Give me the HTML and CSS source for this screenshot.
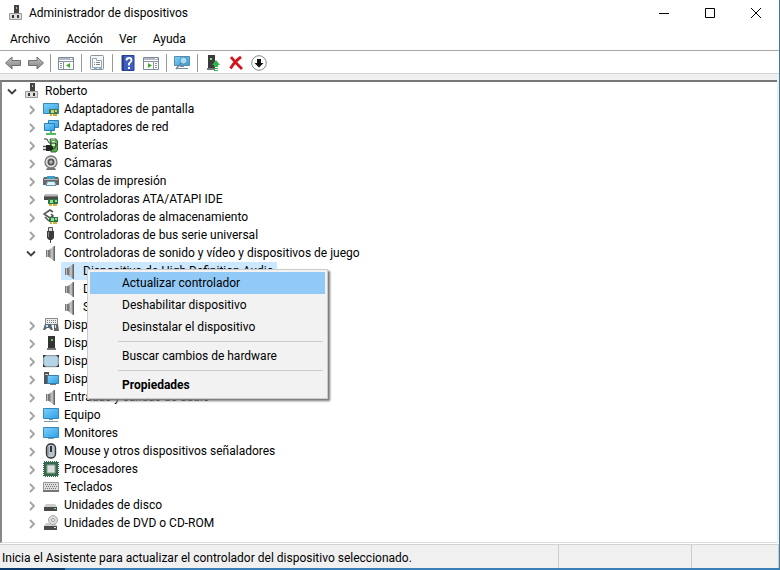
FILE: index.html
```html
<!DOCTYPE html>
<html lang="es">
<head>
	<meta charset="utf-8">
	<title>Administrador de dispositivos</title>
	<link rel="stylesheet" href="styles.css">
</head>
<body>
	<svg class="sprites" aria-hidden="true">
		<defs>
			<linearGradient id="blue" x1="0" y1="0" x2="1" y2="1">
				<stop offset="0" stop-color="#7fd0fa"/>
				<stop offset="1" stop-color="#2d9fe8"/>
			</linearGradient>
			<linearGradient id="metal" x1="0" y1="0" x2="1" y2="0">
				<stop offset="0" stop-color="#6b6b6b"/>
				<stop offset=".6" stop-color="#d0d0d0"/>
				<stop offset="1" stop-color="#777"/>
			</linearGradient>
			<linearGradient id="arrow" x1="0" y1="0" x2="0" y2="1">
				<stop offset="0" stop-color="#c4c4c4"/>
				<stop offset="1" stop-color="#808080"/>
			</linearGradient>
		</defs>
		<symbol id="i-right" viewBox="0 0 16 16"><path d="M7 5l4 4-4 4" fill="none" stroke="#a2a2a2" stroke-width="1.800"/></symbol>
		<symbol id="i-down" viewBox="0 0 16 16"><path d="M4 6.500l4 4 4-4" fill="none" stroke="#404040" stroke-width="1.800"/></symbol>
		<symbol id="i-pc" viewBox="0 0 16 16">
			<path d="M6 0h5v9H6z" fill="#444"/><path d="M8 2h1v2H8z" fill="#bbb"/>
			<path d="M1.500 8.500h12v6h-12z" fill="#dedede" stroke="#999"/><path d="M4 10h2v3H4zM9 10h2v3H9z" fill="#333"/>
		</symbol>
		<symbol id="i-display" viewBox="0 0 16 16">
			<path d="M.5 2.500h15v10H.5z" fill="url(#blue)" stroke="#3a86b8"/>
			<path d="M6 8h9v5H6z" fill="#3d7a4d"/><path d="M8 9h3v3H8zM12 9h2v2h-2z" fill="#c9d87a"/><path d="M7 13h2v2H7zM10 13h4v2h-4z" fill="#d6a92c"/>
		</symbol>
		<symbol id="i-net" viewBox="0 0 16 16">
			<path d="M5.500 1.500h10v7h-10z" fill="url(#blue)" stroke="#2b7fb4"/>
			<path d="M1.500 4.500h10v7h-10z" fill="url(#blue)" stroke="#2b7fb4"/>
			<path d="M7 12h2v2h4v2H3v-2h4z" fill="#4fbd68"/>
		</symbol>
		<symbol id="i-battery" viewBox="0 0 16 16">
			<path d="M7 2h6l1.500 2v9L13 15H8z" fill="#53b04b" stroke="#2e6b2c"/><path d="M8 1h4v2H8z" fill="#aaa"/><path d="M9 4h3v5H9z" fill="#c6f3bc"/>
			<path d="M1 2q4-1 4 2t6 2q3 0 2 3t-4 3" fill="none" stroke="#333"/><path d="M0 9.500h4M0 12.500h4" stroke="#555" stroke-width="1.300"/><path d="M3 8h3q4 0 4 3t-4 3H3z" fill="#222"/>
		</symbol>
		<symbol id="i-camera" viewBox="0 0 16 16">
			<path d="M4 13h8l1 2H3z" fill="#777"/><circle cx="8" cy="7" r="6" fill="#ddd" stroke="#777" stroke-width="1.300"/>
			<circle cx="8" cy="7" r="3.500" fill="#555"/><circle cx="8" cy="7" r="1.700" fill="#bbb"/>
		</symbol>
		<symbol id="i-printer" viewBox="0 0 16 16">
			<path d="M4 3h8v4H4z" fill="#3f9dc9"/><path d="M1 4h3v2h8V4h3l1 2v6h-3l-1-3H4l-1 3H0V6z" fill="#666"/><path d="M1 6h14v1H1z" fill="#bbb"/>
			<path d="M4.500 8.500h7l1.500 4H3z" fill="#def4fc" stroke="#6b93a8"/>
		</symbol>
		<symbol id="i-ata" viewBox="0 0 16 16">
			<path d="M3 3h11l1 2v4H1V5z" fill="#777"/><path d="M3 3h11v2H2z" fill="#bbb"/><path d="M1 6h14v3H1z" fill="#4a4a4a"/>
			<path d="M5 8h10v5H5z" fill="#2f7548"/><path d="M7 9h3v3H7zM12 9h2v2h-2z" fill="#8ee38f"/><path d="M6 13h3v2H6zM10 13h4v2h-4z" fill="#d6b13a"/>
		</symbol>
		<symbol id="i-storage" viewBox="0 0 16 16">
			<path d="M10 3L7 1 1 5l6 4 3-2-2-2M2 8l4 4" fill="none" stroke="#555" stroke-width="1.600"/>
			<path d="M6 8h9v5H6z" fill="#2f7548"/><path d="M8 9h3v3H8zM12 9h2v2h-2z" fill="#8ee38f"/><path d="M7 13h2v2H7zM10 13h4v2h-4z" fill="#d6b13a"/>
		</symbol>
		<symbol id="i-usb" viewBox="0 0 16 16"><path d="M5.500.5h4v4h-4z" fill="#ddd" stroke="#555"/><path d="M4 4h7v7l-2 2H6l-2-2z" fill="#3c3c3c"/><path d="M7 13h1v3H7z" fill="#444"/><path d="M5 5h1v5H5z" fill="#888"/></symbol>
		<symbol id="i-sound" viewBox="0 0 16 16"><path d="M3 5h3v7H3z" fill="#777"/><path d="M6 5l5-4v15l-5-4z" fill="url(#metal)"/><path d="M11 1h1v15h-1z" fill="#666"/><path d="M4 5h1v7H4z" fill="#bbb"/></symbol>
		<symbol id="i-hid" viewBox="0 0 16 16">
			<path d="M2.500 1.500h12v6h-12z" fill="#eee" stroke="#888"/><path d="M4 3.500h9M4 5.500h9" stroke="#777" stroke-dasharray="1 1"/>
			<path d="M2 7h6l2 6H8L6 11H4l-2 2H0z" fill="#536879"/><path d="M11 7h4l1 7h-5z" fill="#666"/><path d="M12 8h1v3h-1zM3 8h2v2H3z" fill="#cfe4ee"/>
		</symbol>
		<symbol id="i-tower" viewBox="0 0 16 16"><path d="M5 1h7v12H5z" fill="#333"/><path d="M4 13h9v2H4z" fill="#777"/><path d="M8 4h2v2H8z" fill="#58dc58"/></symbol>
		<symbol id="i-tablet" viewBox="0 0 16 16"><rect x=".7" y="2.700" width="14.600" height="11" rx="1" fill="#b5d5e6" stroke="#7d8a91"/><path d="M0 2h3L0 5zM16 2h-3l3 3zM0 14h3l-3-3zM16 14h-3l3-3z" fill="#333"/></symbol>
		<symbol id="i-system" viewBox="0 0 16 16"><path d="M1 1h5v12H1z" fill="#555"/><path d="M2 3h3v1H2z" fill="#ccc"/><path d="M4.500 4.500h11v8h-11z" fill="url(#blue)" stroke="#3a7faa"/><path d="M7 13h6v1H7z" fill="#777"/></symbol>
		<symbol id="i-computer" viewBox="0 0 16 16"><path d="M.5 1.500h15v10H.5z" fill="url(#blue)" stroke="#3488bd"/><path d="M6 12h4v1H6zM1 14h14v1H1z" fill="#7b98a8"/></symbol>
		<symbol id="i-monitor" viewBox="0 0 16 16"><path d="M.5 2.500h15v10H.5z" fill="url(#blue)" stroke="#3488bd"/><path d="M5 13h6v1H5z" fill="#7b98a8"/></symbol>
		<symbol id="i-mouse" viewBox="0 0 16 16"><rect x="3.500" y="1" width="9" height="14" rx="4" fill="#b8c2cb" stroke="#333" stroke-width="1.400"/><path d="M7 3h2v6H7z" fill="#333"/><path d="M5 4v8" stroke="#717e8a"/></symbol>
		<symbol id="i-cpu" viewBox="0 0 16 16"><path d="M1 1h14v14H1z" fill="#356b4b" stroke="#356b4b" stroke-width="2" stroke-dasharray="1 1"/><path d="M4 4h8v8H4z" fill="#ddd" stroke="#89a392"/></symbol>
		<symbol id="i-keyboard" viewBox="0 0 16 16"><path d="M.5 3.500h15v9H.5z" fill="#ddd" stroke="#999"/><path d="M2 5.500h12M3 7.500h11M2 9.500h12" stroke="#777" stroke-dasharray="1 1"/><path d="M0 11h16v2H0z" fill="#777"/></symbol>
		<symbol id="i-disk" viewBox="0 0 16 16"><path d="M3 7h9l2 3H1z" fill="#ccc"/><path d="M1 10h13v4H1z" fill="#4a4a4a"/><path d="M11 11h2v1h-2z" fill="#6ef08a"/></symbol>
		<symbol id="i-dvd" viewBox="0 0 16 16"><path d="M3 8h9l2 3H1z" fill="#ccc"/><circle cx="10" cy="5" r="4.500" fill="#ddd" stroke="#aaa"/><circle cx="10" cy="5" r="1.500" fill="#fff" stroke="#999"/><path d="M1 11h13v4H1z" fill="#4a4a4a"/><path d="M11 12h2v1h-2z" fill="#ddd"/></symbol>
		<symbol id="i-panel" viewBox="0 0 16 16"><path d="M.5 2.500h15v12H.5z" fill="#fff" stroke="#7f8a96"/><path d="M1 3h14v2H1z" fill="#b1bac6"/><path d="M12 3.500h2" stroke="#fff"/><path d="M1 6.500h14" stroke="#8a95a2"/></symbol>
	</svg>

	<div class="window">
		<header class="titlebar">
			<svg class="icon"><use href="#i-pc"/></svg>
			<h1>Administrador de dispositivos</h1>
			<div class="controls">
				<button aria-label="Minimizar"><svg viewBox="0 0 12 12"><path d="M1 6.500h10"/></svg></button>
				<button aria-label="Maximizar"><svg viewBox="0 0 12 12"><path d="M1.500 1.500h9v9h-9z"/></svg></button>
				<button aria-label="Cerrar"><svg viewBox="0 0 12 12"><path d="M1 1l10 10M11 1L1 11"/></svg></button>
			</div>
		</header>

		<nav class="menubar">
			<button>Archivo</button>
			<button>Acción</button>
			<button>Ver</button>
			<button>Ayuda</button>
		</nav>

		<div class="toolbar">
			<div class="group">
				<button aria-label="Atrás"><svg class="icon"><path d="M.5 8L7 2v3.500h8.500v5H7V14z" fill="url(#arrow)" stroke="#6f6f6f"/></svg></button>
				<button aria-label="Adelante"><svg class="icon"><path d="M15.500 8L9 2v3.500H.5v5H9V14z" fill="url(#arrow)" stroke="#6f6f6f"/></svg></button>
			</div>
			<div class="group">
				<button aria-label="Mostrar árbol"><svg class="icon"><use href="#i-panel"/><path d="M5.500 7v7" stroke="#8a95a2"/><path d="M2 8.500h2M2 10.500h2M2 12.500h2" stroke="#8a95a2"/><path d="M12 8v5l-4-2.500z" fill="#3fae29"/></svg></button>
			</div>
			<div class="group">
				<button aria-label="Propiedades"><svg class="icon"><rect x="1.500" y=".5" width="13" height="14" rx="1" fill="#f4f6f8" stroke="#8c939a"/><path d="M3.500 3.500h4v2h5v7h-9z" fill="#fff" stroke="#9aa4ae"/><path d="M5 7.500h1M7 7.500h4M5 9.500h1M7 9.500h4" stroke="#7a858f"/><path d="M5 13.500h3M10 13.500h3" stroke="#5fc3e0"/></svg></button>
			</div>
			<div class="group">
				<button aria-label="Ayuda"><svg class="icon"><path d="M2 .5h12v15H2z" fill="#3e5fc0" stroke="#2b3f8e"/><path d="M2 1h2v14H2z" fill="#2b3f8e"/><path d="M6.500 5.500q0-2.500 2.500-2.500t2.500 2.300Q11.500 7 9 8.500v2" fill="none" stroke="#fff" stroke-width="1.800"/><path d="M8 12h2v2H8z" fill="#fff"/></svg></button>
				<button aria-label="Mostrar acciones"><svg class="icon"><use href="#i-panel"/><path d="M10.500 7v7" stroke="#8a95a2"/><path d="M12 8.500h2M12 10.500h2M12 12.500h2" stroke="#8a95a2"/><path d="M5 8v5l4-2.500z" fill="#3fae29"/></svg></button>
			</div>
			<div class="group">
				<button aria-label="Buscar cambios de hardware"><svg class="icon"><path d="M.5 1.500h15v9H.5z" fill="url(#blue)" stroke="#5a8ba8"/><path d="M6 11h4v1H6zM2 13h12v1H2z" fill="#78909c"/><circle cx="9.500" cy="5.500" r="3.500" fill="#a9dcf5" stroke="#5b8fae"/><path d="M7 8l-5 6" stroke="#6d8797" stroke-width="1.500"/></svg></button>
			</div>
			<div class="group">
				<button aria-label="Actualizar controlador"><svg class="icon"><path d="M3 0h7v13H3z" fill="#3b3b3b"/><path d="M2 13h8v2H2z" fill="#777"/><path d="M5 3h2v2H5z" fill="#7fe07f"/><path d="M11 5l4 5h-2v2H9v-2H7zM9 13h4v1H9zM9 15h4v1H9z" fill="#35b14a"/></svg></button>
				<button aria-label="Desinstalar dispositivo"><svg class="icon"><path d="M3 2q3 4 11 12M13 2Q7 6 2.500 13.500" fill="none" stroke="#d3141c" stroke-width="2.800"/></svg></button>
				<button aria-label="Deshabilitar dispositivo"><svg class="icon"><circle cx="8" cy="8" r="7.300" fill="#fff" stroke="#888"/><path d="M6 4h4v4h2.500L8 12.500 3.500 8H6z" fill="#111"/></svg></button>
			</div>
		</div>

		<main class="tree">
			<ul>
				<li>
					<div class="row"><button class="toggle" aria-label="Contraer"><svg class="icon"><use href="#i-down"/></svg></button><span class="node"><svg class="icon"><use href="#i-pc"/></svg>Roberto</span></div>
					<ul>
						<li class="row"><button class="toggle" aria-label="Expandir"><svg class="icon"><use href="#i-right"/></svg></button><span class="node"><svg class="icon"><use href="#i-display"/></svg>Adaptadores de pantalla</span></li>
						<li class="row"><button class="toggle" aria-label="Expandir"><svg class="icon"><use href="#i-right"/></svg></button><span class="node"><svg class="icon"><use href="#i-net"/></svg>Adaptadores de red</span></li>
						<li class="row"><button class="toggle" aria-label="Expandir"><svg class="icon"><use href="#i-right"/></svg></button><span class="node"><svg class="icon"><use href="#i-battery"/></svg>Baterías</span></li>
						<li class="row"><button class="toggle" aria-label="Expandir"><svg class="icon"><use href="#i-right"/></svg></button><span class="node"><svg class="icon"><use href="#i-camera"/></svg>Cámaras</span></li>
						<li class="row"><button class="toggle" aria-label="Expandir"><svg class="icon"><use href="#i-right"/></svg></button><span class="node"><svg class="icon"><use href="#i-printer"/></svg>Colas de impresión</span></li>
						<li class="row"><button class="toggle" aria-label="Expandir"><svg class="icon"><use href="#i-right"/></svg></button><span class="node"><svg class="icon"><use href="#i-ata"/></svg>Controladoras ATA/ATAPI IDE</span></li>
						<li class="row"><button class="toggle" aria-label="Expandir"><svg class="icon"><use href="#i-right"/></svg></button><span class="node"><svg class="icon"><use href="#i-storage"/></svg>Controladoras de almacenamiento</span></li>
						<li class="row"><button class="toggle" aria-label="Expandir"><svg class="icon"><use href="#i-right"/></svg></button><span class="node"><svg class="icon"><use href="#i-usb"/></svg>Controladoras de bus serie universal</span></li>
						<li>
							<div class="row"><button class="toggle" aria-label="Contraer"><svg class="icon"><use href="#i-down"/></svg></button><span class="node"><svg class="icon"><use href="#i-sound"/></svg>Controladoras de sonido y vídeo y dispositivos de juego</span></div>
							<ul class="leaves">
								<li class="row selected">
									<span class="node"><svg class="icon"><use href="#i-sound"/></svg>Dispositivo de High Definition Audio</span>
									<div class="context-menu">
										<button class="active">Actualizar controlador</button>
										<button>Deshabilitar dispositivo</button>
										<button>Desinstalar el dispositivo</button>
										<hr>
										<button>Buscar cambios de hardware</button>
										<hr>
										<button class="default">Propiedades</button>
									</div>
								</li>
								<li class="row"><span class="node"><svg class="icon"><use href="#i-sound"/></svg>D</span></li>
								<li class="row"><span class="node"><svg class="icon"><use href="#i-sound"/></svg>S</span></li>
							</ul>
						</li>
						<li class="row"><button class="toggle" aria-label="Expandir"><svg class="icon"><use href="#i-right"/></svg></button><span class="node"><svg class="icon"><use href="#i-hid"/></svg>Disp</span></li>
						<li class="row"><button class="toggle" aria-label="Expandir"><svg class="icon"><use href="#i-right"/></svg></button><span class="node"><svg class="icon"><use href="#i-tower"/></svg>Disp</span></li>
						<li class="row"><button class="toggle" aria-label="Expandir"><svg class="icon"><use href="#i-right"/></svg></button><span class="node"><svg class="icon"><use href="#i-tablet"/></svg>Disp</span></li>
						<li class="row"><button class="toggle" aria-label="Expandir"><svg class="icon"><use href="#i-right"/></svg></button><span class="node"><svg class="icon"><use href="#i-system"/></svg>Disp</span></li>
						<li class="row"><button class="toggle" aria-label="Expandir"><svg class="icon"><use href="#i-right"/></svg></button><span class="node"><svg class="icon"><use href="#i-sound"/></svg>Entradas y salidas de audio</span></li>
						<li class="row"><button class="toggle" aria-label="Expandir"><svg class="icon"><use href="#i-right"/></svg></button><span class="node"><svg class="icon"><use href="#i-computer"/></svg>Equipo</span></li>
						<li class="row"><button class="toggle" aria-label="Expandir"><svg class="icon"><use href="#i-right"/></svg></button><span class="node"><svg class="icon"><use href="#i-monitor"/></svg>Monitores</span></li>
						<li class="row"><button class="toggle" aria-label="Expandir"><svg class="icon"><use href="#i-right"/></svg></button><span class="node"><svg class="icon"><use href="#i-mouse"/></svg>Mouse y otros dispositivos señaladores</span></li>
						<li class="row"><button class="toggle" aria-label="Expandir"><svg class="icon"><use href="#i-right"/></svg></button><span class="node"><svg class="icon"><use href="#i-cpu"/></svg>Procesadores</span></li>
						<li class="row"><button class="toggle" aria-label="Expandir"><svg class="icon"><use href="#i-right"/></svg></button><span class="node"><svg class="icon"><use href="#i-keyboard"/></svg>Teclados</span></li>
						<li class="row"><button class="toggle" aria-label="Expandir"><svg class="icon"><use href="#i-right"/></svg></button><span class="node"><svg class="icon"><use href="#i-disk"/></svg>Unidades de disco</span></li>
						<li class="row"><button class="toggle" aria-label="Expandir"><svg class="icon"><use href="#i-right"/></svg></button><span class="node"><svg class="icon"><use href="#i-dvd"/></svg>Unidades de DVD o CD-ROM</span></li>
					</ul>
				</li>
			</ul>
		</main>

		<footer class="statusbar">
			<span>Inicia el Asistente para actualizar el controlador del dispositivo seleccionado.</span>
			<span></span>
			<span></span>
		</footer>
	</div>
</body>
</html>
```
FILE: styles.css
```css
*{
	box-sizing: border-box;
}
body{
	margin: 0;
}
body,button{
	font-family: Roboto, "Open Sans", sans-serif;
	font-size: 12px;
	line-height: 18px;
	color: #000;
}
button{
	display: flex;
	align-items: center;
	padding: 0;
	border: 0;
	background: none;
	white-space: nowrap;
}
ul{
	list-style: none;
	margin: 0;
	padding: 0;
}
.sprites{
	position: absolute;
	width: 0;
	height: 0;
}
.icon{
	flex: none;
	width: 16px;
	height: 16px;
}
.window{
	display: flex;
	flex-direction: column;
	min-height: 100vh;
	background-color: #fff;
	border-right: 1px solid #3a7ca5;
}
.window::after{
	content: "";
	height: 2px;
	background: linear-gradient(to right, #0b3a6b 65px, #3a7fb8 65px);
}
.titlebar{
	display: flex;
	align-items: center;
	height: 26px;
	padding-left: 8px;
}
.titlebar h1{
	flex: 1;
	margin: 0 0 0 5px;
	font-size: 12px;
	font-weight: normal;
}
.controls{
	display: flex;
}
.controls button{
	justify-content: center;
	width: 46px;
	height: 26px;
}
.controls svg{
	width: 12px;
	height: 12px;
	fill: none;
	stroke: #000;
}
.menubar{
	display: flex;
	align-items: center;
	gap: 16px;
	height: 24px;
	padding: 2px 0 0 10px;
}
.toolbar{
	display: flex;
	align-items: center;
	height: 24px;
	padding-top: 2px;
	border-top: 1px solid #aaa;
	border-bottom: 1px solid #d4d4d4;
}
.group{
	display: flex;
	align-items: center;
	gap: 7px;
	height: 18px;
	padding: 0 7px;
	border-right: 1px solid #999;
}
.group:first-child{
	padding: 0 6px 0 5px;
}
.group:last-child{
	border-right: 0;
}
.tree{
	flex: 1;
	margin-top: 6px;
	margin-right: 2px;
	padding-left: 2px;
	border-top: 2px solid #777;
	border-left: 2px solid #888;
	border-bottom: 1px solid #ddd;
	outline: 6px solid #f0f0f0;
	clip-path: inset(-6px -2px 0 0);
}
.tree ul ul{
	padding-left: 19px;
}
.row{
	display: flex;
	align-items: center;
	position: relative;
	height: 18px;
}
.toggle{
	flex: none;
}
.node{
	display: flex;
	align-items: center;
	gap: 5px;
	height: 18px;
	margin-left: 3px;
	padding: 0 3px 0 1px;
	white-space: nowrap;
}
.leaves .node{
	margin-left: 19px;
}
.selected .node{
	background-color: #cce8ff;
}
.context-menu{
	position: absolute;
	top: 7px;
	left: 45px;
	z-index: 1;
	width: 241px;
	padding: 2px;
	background-color: #f2f2f2;
	border: 1px solid #ccc;
	box-shadow: 2px 2px 2px #777;
}
.context-menu button{
	width: 100%;
	height: 22px;
	padding-left: 32px;
}
.context-menu .active{
	background-color: #91c9f7;
}
.context-menu .default{
	font-weight: bold;
}
.context-menu hr{
	height: 1px;
	margin: 3px 2px 3px 28px;
	border: 0;
	background-color: #ccc;
}
.statusbar{
	display: grid;
	grid-template-columns: 1fr 133px 87px;
	height: 24px;
	margin-top: 1px;
	border-top: 1px solid #d4d4d4;
	background-color: #f0f0f0;
}
.statusbar span{
	padding: 4px 2px 2px;
	border-right: 1px solid #ccc;
	white-space: nowrap;
}
```
